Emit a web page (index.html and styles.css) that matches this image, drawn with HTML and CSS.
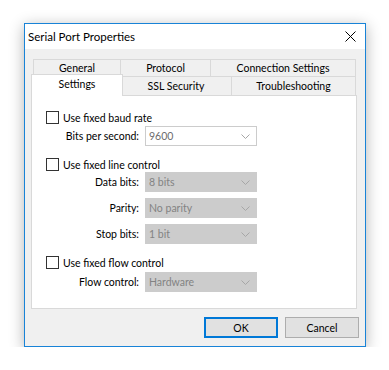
FILE: index.html
```html
<!DOCTYPE html>
<html lang="en">
<head>
    <meta charset="UTF-8">
    <meta name="viewport" content="width=device-width, initial-scale=1.0">
    <title>Serial Port Properties</title>
    <link rel="stylesheet" href="styles.css">
</head>
<body>
    <div class="dialog">
        <div class="titlebar">
            <span class="title">Serial Port Properties</span>
            <svg class="close" width="11" height="11" viewBox="0 0 11 11">
                <path d="M0.5 0.5 L10.5 10.5 M10.5 0.5 L0.5 10.5" stroke="#000" stroke-width="1" fill="none"/>
            </svg>
        </div>

        <div class="content">
            <div class="tabs">
                <div class="tab-row back">
                    <div class="tab tab-general">General</div>
                    <div class="tab tab-protocol">Protocol</div>
                    <div class="tab tab-connection">Connection Settings</div>
                </div>
                <div class="tab-row front">
                    <div class="tab tab-settings selected">Settings</div>
                    <div class="tab tab-ssl">SSL Security</div>
                    <div class="tab tab-trouble">Troubleshooting</div>
                </div>
            </div>

            <div class="panel">
                <label class="check first">
                    <span class="box"></span>
                    <span>Use fixed baud rate</span>
                </label>
                <div class="field after-check">
                    <span class="field-label">Bits per second:</span>
                    <div class="combo">
                        <span>9600</span>
                        <svg class="chevron" width="9" height="5" viewBox="0 0 9 5"><polyline points="0.5,0.5 4.5,4.5 8.5,0.5" fill="none" stroke="#a6a6a6"/></svg>
                    </div>
                </div>

                <label class="check">
                    <span class="box"></span>
                    <span>Use fixed line control</span>
                </label>
                <div class="field after-check tight">
                    <span class="field-label">Data bits:</span>
                    <div class="combo disabled">
                        <span>8 bits</span>
                        <svg class="chevron" width="9" height="5" viewBox="0 0 9 5"><polyline points="0.5,0.5 4.5,4.5 8.5,0.5" fill="none" stroke="#a6a6a6"/></svg>
                    </div>
                </div>
                <div class="field">
                    <span class="field-label">Parity:</span>
                    <div class="combo disabled">
                        <span>No parity</span>
                        <svg class="chevron" width="9" height="5" viewBox="0 0 9 5"><polyline points="0.5,0.5 4.5,4.5 8.5,0.5" fill="none" stroke="#a6a6a6"/></svg>
                    </div>
                </div>
                <div class="field">
                    <span class="field-label">Stop bits:</span>
                    <div class="combo disabled">
                        <span>1 bit</span>
                        <svg class="chevron" width="9" height="5" viewBox="0 0 9 5"><polyline points="0.5,0.5 4.5,4.5 8.5,0.5" fill="none" stroke="#a6a6a6"/></svg>
                    </div>
                </div>

                <label class="check">
                    <span class="box"></span>
                    <span>Use fixed flow control</span>
                </label>
                <div class="field after-check loose">
                    <span class="field-label">Flow control:</span>
                    <div class="combo disabled">
                        <span>Hardware</span>
                        <svg class="chevron" width="9" height="5" viewBox="0 0 9 5"><polyline points="0.5,0.5 4.5,4.5 8.5,0.5" fill="none" stroke="#a6a6a6"/></svg>
                    </div>
                </div>
            </div>

            <div class="buttons">
                <button class="btn default">OK</button>
                <button class="btn">Cancel</button>
            </div>
        </div>
    </div>
</body>
</html>
```

FILE: styles.css
```css
body {
    margin: 0;
    background-color: #fff;
    font-family: Lato, "Noto Sans", sans-serif;
    font-size: 10.5px;
    color: #000;
}

.dialog {
    margin: 23px 0 0 24px;
    width: 340px;
    border: 1px solid #1883d7;
    background-color: #f0f0f0;
    box-shadow: 0 3px 14px rgba(0, 0, 0, 0.3);
}

.titlebar {
    height: 25px;
    background-color: #fff;
    display: flex;
    align-items: center;
    justify-content: space-between;
    padding: 0 9px 0 3px;
}

.title {
    font-size: 11.5px;
}

.close {
    display: block;
}

.content {
    padding: 10px 0 8px 6px;
}

.tabs {
    width: 326px;
}

.tab-row {
    display: flex;
    padding-left: 2px;
}

.tab {
    box-sizing: border-box;
    border: 1px solid #d9d9d9;
    border-bottom: none;
    background-color: #f0f0f0;
    text-align: center;
    margin-right: -1px;
}

.back .tab {
    height: 17px;
    line-height: 16px;
}

.front .tab {
    height: 19px;
    line-height: 19px;
}

.tab-general { width: 88px; }
.tab-protocol { width: 91px; }
.tab-connection { width: 146px; }
.tab-settings { width: 88px; }
.tab-ssl { width: 112px; }
.tab-trouble { width: 125px; }

.front .tab.selected {
    position: relative;
    z-index: 1;
    width: 92px;
    height: 22px;
    margin: -2px -3px -1px -2px;
    background-color: #fff;
    line-height: 18px;
}

.panel {
    box-sizing: border-box;
    width: 326px;
    height: 214px;
    border: 1px solid #d9d9d9;
    background-color: #fff;
    padding: 15px 0 0 14px;
}

.check {
    display: flex;
    align-items: center;
    gap: 4px;
    height: 13px;
    margin-top: 12px;
}

.check.first {
    margin-top: 0;
}

.box {
    box-sizing: border-box;
    width: 13px;
    height: 13px;
    border: 1px solid #333;
    background-color: #fff;
}

.field {
    display: flex;
    align-items: center;
    margin-top: 6px;
}

.field.after-check {
    margin-top: 2px;
}

.field.tight {
    margin-top: 1px;
}

.field.loose {
    margin-top: 3px;
}

.field-label {
    width: 93px;
    text-align: right;
    margin-right: 6px;
}

.combo {
    box-sizing: border-box;
    width: 112px;
    height: 20px;
    border: 1px solid #cccccc;
    background-color: #fff;
    color: #6d6d6d;
    display: flex;
    align-items: center;
    justify-content: space-between;
    padding: 0 6px 0 3px;
}

.combo.disabled {
    background-color: #cccccc;
    color: #838383;
}

.chevron {
    display: block;
}

.buttons {
    display: flex;
    justify-content: flex-end;
    gap: 7px;
    width: 328px;
    margin-top: 8px;
}

.btn {
    box-sizing: border-box;
    width: 74px;
    height: 21px;
    border: 1px solid #adadad;
    background-color: #e1e1e1;
    font-family: Lato, "Noto Sans", sans-serif;
    font-size: 10.5px;
    color: #000;
    padding: 0;
}

.btn.default {
    border: 2px solid #0078d7;
}
```
